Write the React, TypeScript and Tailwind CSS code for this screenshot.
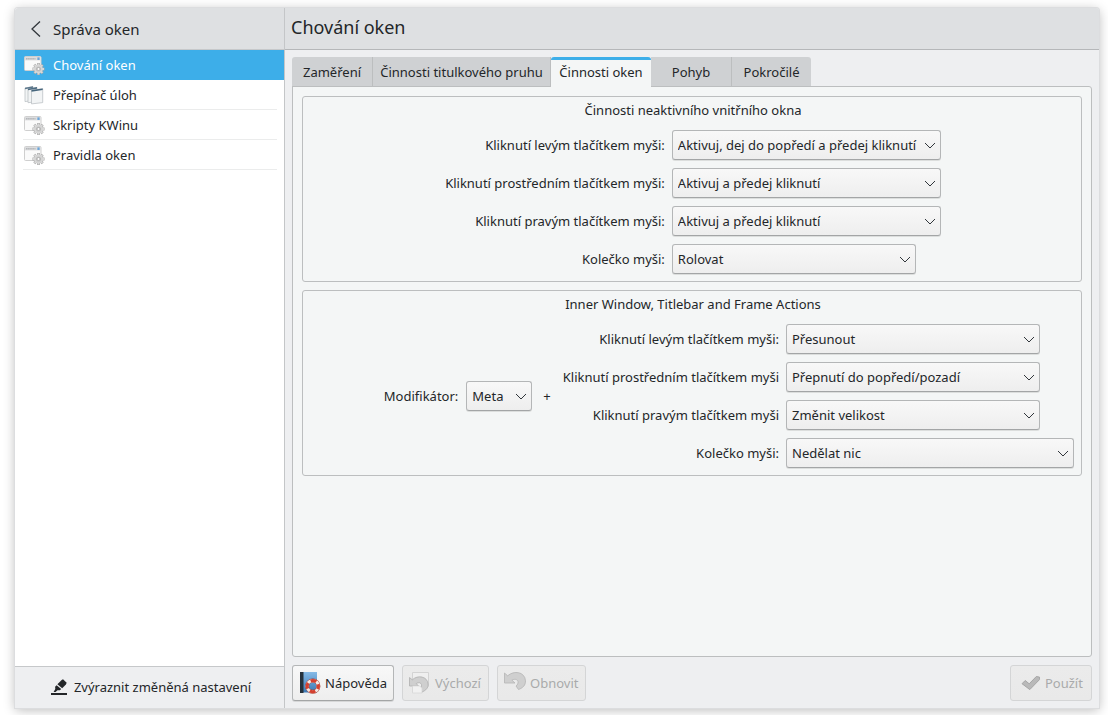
import { useState } from "react";
import clsx from "clsx";

interface ComboProps {
  id: string;
  options: string[];
  className: string;
}

interface RowProps {
  id: string;
  label: string;
  options: string[];
  width: string;
}

const clickActions = [
  "Aktivuj, dej do popředí a předej kliknutí",
  "Aktivuj a předej kliknutí",
  "Aktivuj",
];

const innerRows: RowProps[] = [
  {
    id: "inner-left",
    label: "Kliknutí levým tlačítkem myši:",
    options: clickActions,
    width: "w-[269px]",
  },
  {
    id: "inner-middle",
    label: "Kliknutí prostředním tlačítkem myši:",
    options: ["Aktivuj a předej kliknutí", "Aktivuj"],
    width: "w-[269px]",
  },
  {
    id: "inner-right",
    label: "Kliknutí pravým tlačítkem myši:",
    options: ["Aktivuj a předej kliknutí", "Aktivuj"],
    width: "w-[269px]",
  },
  {
    id: "inner-wheel",
    label: "Kolečko myši:",
    options: ["Rolovat"],
    width: "w-[244px]",
  },
];

const frameRows: RowProps[] = [
  {
    id: "frame-left",
    label: "Kliknutí levým tlačítkem myši:",
    options: ["Přesunout", "Změnit velikost", "Nedělat nic"],
    width: "w-[254px]",
  },
  {
    id: "frame-middle",
    label: "Kliknutí prostředním tlačítkem myši",
    options: ["Přepnutí do popředí/pozadí", "Nedělat nic"],
    width: "w-[254px]",
  },
  {
    id: "frame-right",
    label: "Kliknutí pravým tlačítkem myši",
    options: ["Změnit velikost", "Přesunout", "Nedělat nic"],
    width: "w-[254px]",
  },
  {
    id: "frame-wheel",
    label: "Kolečko myši:",
    options: ["Nedělat nic"],
    width: "w-[288px]",
  },
];

const tabs = [
  { name: "Zaměření", width: "w-[81px]" },
  { name: "Činnosti titulkového pruhu", width: "w-[178px]" },
  { name: "Činnosti oken", width: "w-[100px]" },
  { name: "Pohyb", width: "w-[81px]" },
  { name: "Pokročilé", width: "w-[79px]" },
];

const sections = [
  { name: "Chování oken", icon: <WindowGearIcon /> },
  { name: "Přepínač úloh", icon: <SwitcherIcon /> },
  { name: "Skripty KWinu", icon: <WindowGearIcon /> },
  { name: "Pravidla oken", icon: <WindowGearIcon /> },
];

function WindowGearIcon() {
  return (
    <svg width="22" height="22" viewBox="0 0 22 22" className="shrink-0">
      <rect x="1.5" y="2.5" width="16.5" height="14" rx="1" fill="#fafafa" stroke="#cfcfcf" />
      <rect x="2" y="3" width="15.5" height="3.4" fill="#dcdddf" />
      <path d="M3 4.700h9.500" stroke="#b3b6b9" strokeWidth="1.4" strokeDasharray="1.6 .5" />
      <rect x="14.4" y="3.4" width="2.2" height="2.6" fill="#6ba5da" />
      <g stroke="#a8a8a8" strokeWidth="2.8">
        <path d="M15.500 9v12M9.500 15h12M11.260 10.760l8.480 8.480M19.740 10.760l-8.480 8.480" />
      </g>
      <g stroke="#d9d9d9" strokeWidth="1.800">
        <path d="M15.500 9.500v11M10 15h11M11.620 11.120l7.760 7.760M19.380 11.120l-7.760 7.760" />
      </g>
      <circle cx="15.5" cy="15" r="4.300" fill="#d6d6d6" />
      <circle cx="15.5" cy="15" r="2.600" fill="#c2c2c2" />
      <circle cx="15.5" cy="15" r="1.500" fill="#fafafa" stroke="#9c9c9c" strokeWidth=".6" />
    </svg>
  );
}

function SwitcherIcon() {
  return (
    <svg width="22" height="22" viewBox="0 0 22 22" className="shrink-0">
      <g stroke="#b4babf" strokeWidth=".7" fill="#f2f4f5">
        <path d="M2 4 10 2.600v13.800L2 17.600z" />
        <path d="M5 4.800 14 3.400v14.200L5 18.700z" />
        <path d="M8.500 6.200 19.700 4.600v14l-11.200 1.300z" />
      </g>
      <path d="M2 3.700 10 2.300v1.500L2 5.200z" fill="#5c788d" />
      <path d="M5 4.700 14 3.100v1.600L5 6.300z" fill="#4f6d83" />
      <path d="M8.500 6.100 19.700 4.400v1.700L8.500 7.800z" fill="#46667d" />
    </svg>
  );
}

function HighlighterIcon() {
  return (
    <svg width="16" height="16" viewBox="0 0 16 16" fill="#232629">
      <path d="M0 14h16v2H0z" />
      <path d="M12 .3 15.700 3.700 14.900 5.500 11.200 9.200 6.400 5.300 10.700.9z" />
      <path d="M5.600 6.200 10.200 10 8.800 11.300 6.500 11.200 4.600 12.900H2.600l1.700-3-.2-2.200z" />
    </svg>
  );
}

function HelpIcon() {
  return (
    <svg width="22" height="22" viewBox="0 0 22 22">
      <defs>
        <linearGradient id="cover" x1="0" y1="0" x2="0" y2="1">
          <stop offset="0" stopColor="#86bae6" />
          <stop offset="1" stopColor="#3a78b4" />
        </linearGradient>
      </defs>
      <path d="M1 0h17v20.500H1z" fill="url(#cover)" />
      <path d="M1 0h3.500v21H1z" fill="#26323c" />
      <circle cx="13.800" cy="14.200" r="5.600" fill="none" stroke="#9a3a30" strokeWidth="4" />
      <circle cx="13.800" cy="14.200" r="5.600" fill="none" stroke="#f3e9e6" strokeWidth="3.200" />
      <g fill="none" stroke="#d4402f" strokeWidth="3.200">
        <circle cx="13.800" cy="14.200" r="5.600" strokeDasharray="5.800 2.996" strokeDashoffset="2.900" />
      </g>
    </svg>
  );
}

function DefaultsIcon() {
  return (
    <svg width="22" height="22" viewBox="0 0 22 22">
      <path d="M3.500.5h16V14l-6 6h-10z" fill="#efefef" stroke="#d3d3d3" />
      <path
        d="M.5 5.500v8.500h9L7.200 11.500c2.300-1.400 4.900-.8 5.300 1.200.3 1.700-.5 3-1.700 4l2.200 3.200c4-1.400 6.300-4.100 6.100-7.800C18.700 4.500 8.800 2.500 3.300 7.800z"
        fill="#cfcfcf"
        stroke="#b0b0b0"
        strokeWidth=".8"
      />
      <path d="M3.500 14h7l2.500 2v5h-9.500z" fill="#f1f1f1" stroke="#d5d5d5" strokeWidth=".7" />
    </svg>
  );
}

function ResetIcon() {
  return (
    <svg width="22" height="22" viewBox="0 0 22 22">
      <path
        d="M.5 1v10H11L7.900 8.200c2.500-1.600 5.600-.9 6.100 1.300.4 1.900-.6 3.500-2 4.500l2.500 3.500c4.500-1.500 7.200-4.500 7-8.700C21-.2 10-2 3.700 3.800z"
        fill="#cfcfcf"
        stroke="#b5b5b5"
        strokeWidth=".8"
      />
    </svg>
  );
}

function ApplyIcon() {
  return (
    <svg width="20" height="18" viewBox="0 0 20 18">
      <path
        d="M1 9.700 4.200 6.500l4 3.300L15.300 2.500l3.200.6v2.500L8.800 15.600z"
        fill="#b9b9b9"
        stroke="#a0a0a0"
        strokeWidth=".9"
        strokeLinejoin="round"
      />
    </svg>
  );
}

function Combo({ id, options, className }: ComboProps) {
  return (
    <div className={clsx("relative", className)}>
      <select
        id={id}
        className="h-[30px] w-full appearance-none rounded-[3px] border border-[#b4b6b7] border-b-[#a3a5a6] bg-linear-to-b from-[#f8f8f8] to-[#eeeeee] pr-5 pl-[5px] shadow-[0_1px_0_#dcdedd] outline-none"
      >
        {options.map((option) => (
          <option key={option}>{option}</option>
        ))}
      </select>
      <svg
        width="12"
        height="8"
        viewBox="0 0 12 8"
        className="pointer-events-none absolute top-3 right-[5px]"
        fill="none"
        stroke="#31363b"
      >
        <path d="M1 1l5 5 5-5" />
      </svg>
    </div>
  );
}

function FormRows({ rows }: { rows: RowProps[] }) {
  return (
    <div className="grid grid-cols-[auto_auto] items-center gap-x-[7px] gap-y-2">
      {rows.map((row) => (
        <div key={row.id} className="contents">
          <label htmlFor={row.id} className="text-right">
            {row.label}
          </label>
          <Combo id={row.id} options={row.options} className={row.width} />
        </div>
      ))}
    </div>
  );
}

const groupClass = "rounded-[3px] border border-[#bcbebf] pl-[9px] pr-[7px] pt-[3px] pb-[7px]";
const buttonClass =
  "flex h-9 items-center gap-1 rounded-[3px] border border-[#b4b6b7] border-b-[#a3a5a6] bg-linear-to-b from-[#f8f8f8] to-[#eeeeee] shadow-[0_1px_0_#d6d7d8] disabled:border-[#d4d5d6] disabled:from-[#ebebeb] disabled:to-[#e9e9e9] disabled:text-[#a9aaab] disabled:shadow-none";

export default function App() {
  const [section, setSection] = useState("Chování oken");
  const [tab, setTab] = useState("Činnosti oken");

  return (
    <div className="h-screen bg-white pt-2 pr-[9px] pb-[7px] pl-[15px] font-['Noto_Sans',sans-serif] text-[13px] leading-5 text-[#232629]">
      <div className="flex h-full overflow-hidden rounded-t-[3px] bg-[#eeeff1] shadow-[0_0_0_1px_#dcdddf,0_2px_12px_rgba(0,0,0,0.28)]">
        <aside className="flex w-[270px] shrink-0 flex-col border-r border-[#c4c6c8] bg-white">
          <header className="flex h-[42px] shrink-0 items-center border-b border-[#c6c8ca] bg-[#dee0e2]">
            <button type="button" className="flex items-center pl-[15px] text-[15px]">
              <svg width="12" height="18" viewBox="0 0 12 18" fill="none" stroke="#31363b" strokeWidth="1.300">
                <path d="M10 1.500 2 9l8 7.500" />
              </svg>
              <span className="pl-[11px]">Správa oken</span>
            </button>
          </header>

          <nav className="flex-1">
            {sections.map(({ name, icon }) => (
              <button
                key={name}
                type="button"
                onClick={() => setSection(name)}
                className={clsx("block w-full pr-[7px] pl-2", section === name && "bg-[#3daee9] text-white")}
              >
                <span
                  className={clsx(
                    "flex h-[30px] items-center gap-2 border-b",
                    section === name ? "border-transparent" : "border-[#ebecec]",
                  )}
                >
                  {icon}
                  {name}
                </span>
              </button>
            ))}
          </nav>

          <footer className="flex h-[42px] shrink-0 border-t border-[#c6c8ca] bg-[#eeeff1]">
            <button type="button" className="flex flex-1 items-center justify-center gap-[7px] pb-px pl-[3px]">
              <HighlighterIcon />
              Zvýraznit změněná nastavení
            </button>
          </footer>
        </aside>

        <main className="flex min-w-0 flex-1 flex-col">
          <header className="flex h-[42px] shrink-0 items-center border-b border-[#b5b7b9] bg-[#dee0e2] px-1.5 pb-1">
            <h1 className="text-[18px] leading-6">Chování oken</h1>
          </header>

          <div className="flex min-h-0 flex-1 flex-col px-[7px] py-[7px]">
            <div role="tablist" className="z-10 -mb-px flex">
              {tabs.map(({ name, width }) => (
                <button
                  key={name}
                  type="button"
                  role="tab"
                  aria-selected={tab === name}
                  onClick={() => setTab(name)}
                  className={clsx(
                    "h-[30px] border-[#bcbebf] whitespace-nowrap first:rounded-tl-[3px] last:rounded-tr-[3px] last:border-r-0",
                    width,
                    tab === name
                      ? "rounded-t-[3px] border-t-[3px] border-t-[#3daee9] bg-[#f4f6f6] pb-[3px]"
                      : "border-r border-b bg-[#cfd1d3]",
                  )}
                >
                  {name}
                </button>
              ))}
            </div>

            <section
              role="tabpanel"
              className="flex min-h-0 flex-1 flex-col gap-2 rounded-[3px] rounded-tl-none border border-[#bcbebf] bg-[#f4f6f6] p-[9px]"
            >
              <div className={groupClass}>
                <h2 className="pb-[10px] text-center">Činnosti neaktivního vnitřního okna</h2>
                <div className="flex justify-center">
                  <FormRows rows={innerRows} />
                </div>
              </div>

              <div className={groupClass}>
                <h2 className="pb-[10px] text-center">Inner Window, Titlebar and Frame Actions</h2>
                <div className="flex items-center justify-end">
                  <label htmlFor="modifier" className="pr-2">
                    Modifikátor:
                  </label>
                  <Combo id="modifier" options={["Meta", "Alt"]} className="w-[66px]" />
                  <span className="pr-3 pl-[11px]">+</span>
                  <FormRows rows={frameRows} />
                </div>
              </div>
            </section>

            <div className="flex gap-2 pt-2">
              <button type="button" className={clsx(buttonClass, "w-[102px] pl-1.5")}>
                <HelpIcon />
                Nápověda
              </button>
              <button type="button" disabled className={clsx(buttonClass, "w-[87px] pl-1.5")}>
                <DefaultsIcon />
                Výchozí
              </button>
              <button type="button" disabled className={clsx(buttonClass, "w-[89px] pl-1.5")}>
                <ResetIcon />
                Obnovit
              </button>
              <button type="button" disabled className={clsx(buttonClass, "ml-auto w-[82px] pl-2.5")}>
                <ApplyIcon />
                Použít
              </button>
            </div>
          </div>
        </main>
      </div>
    </div>
  );
}
